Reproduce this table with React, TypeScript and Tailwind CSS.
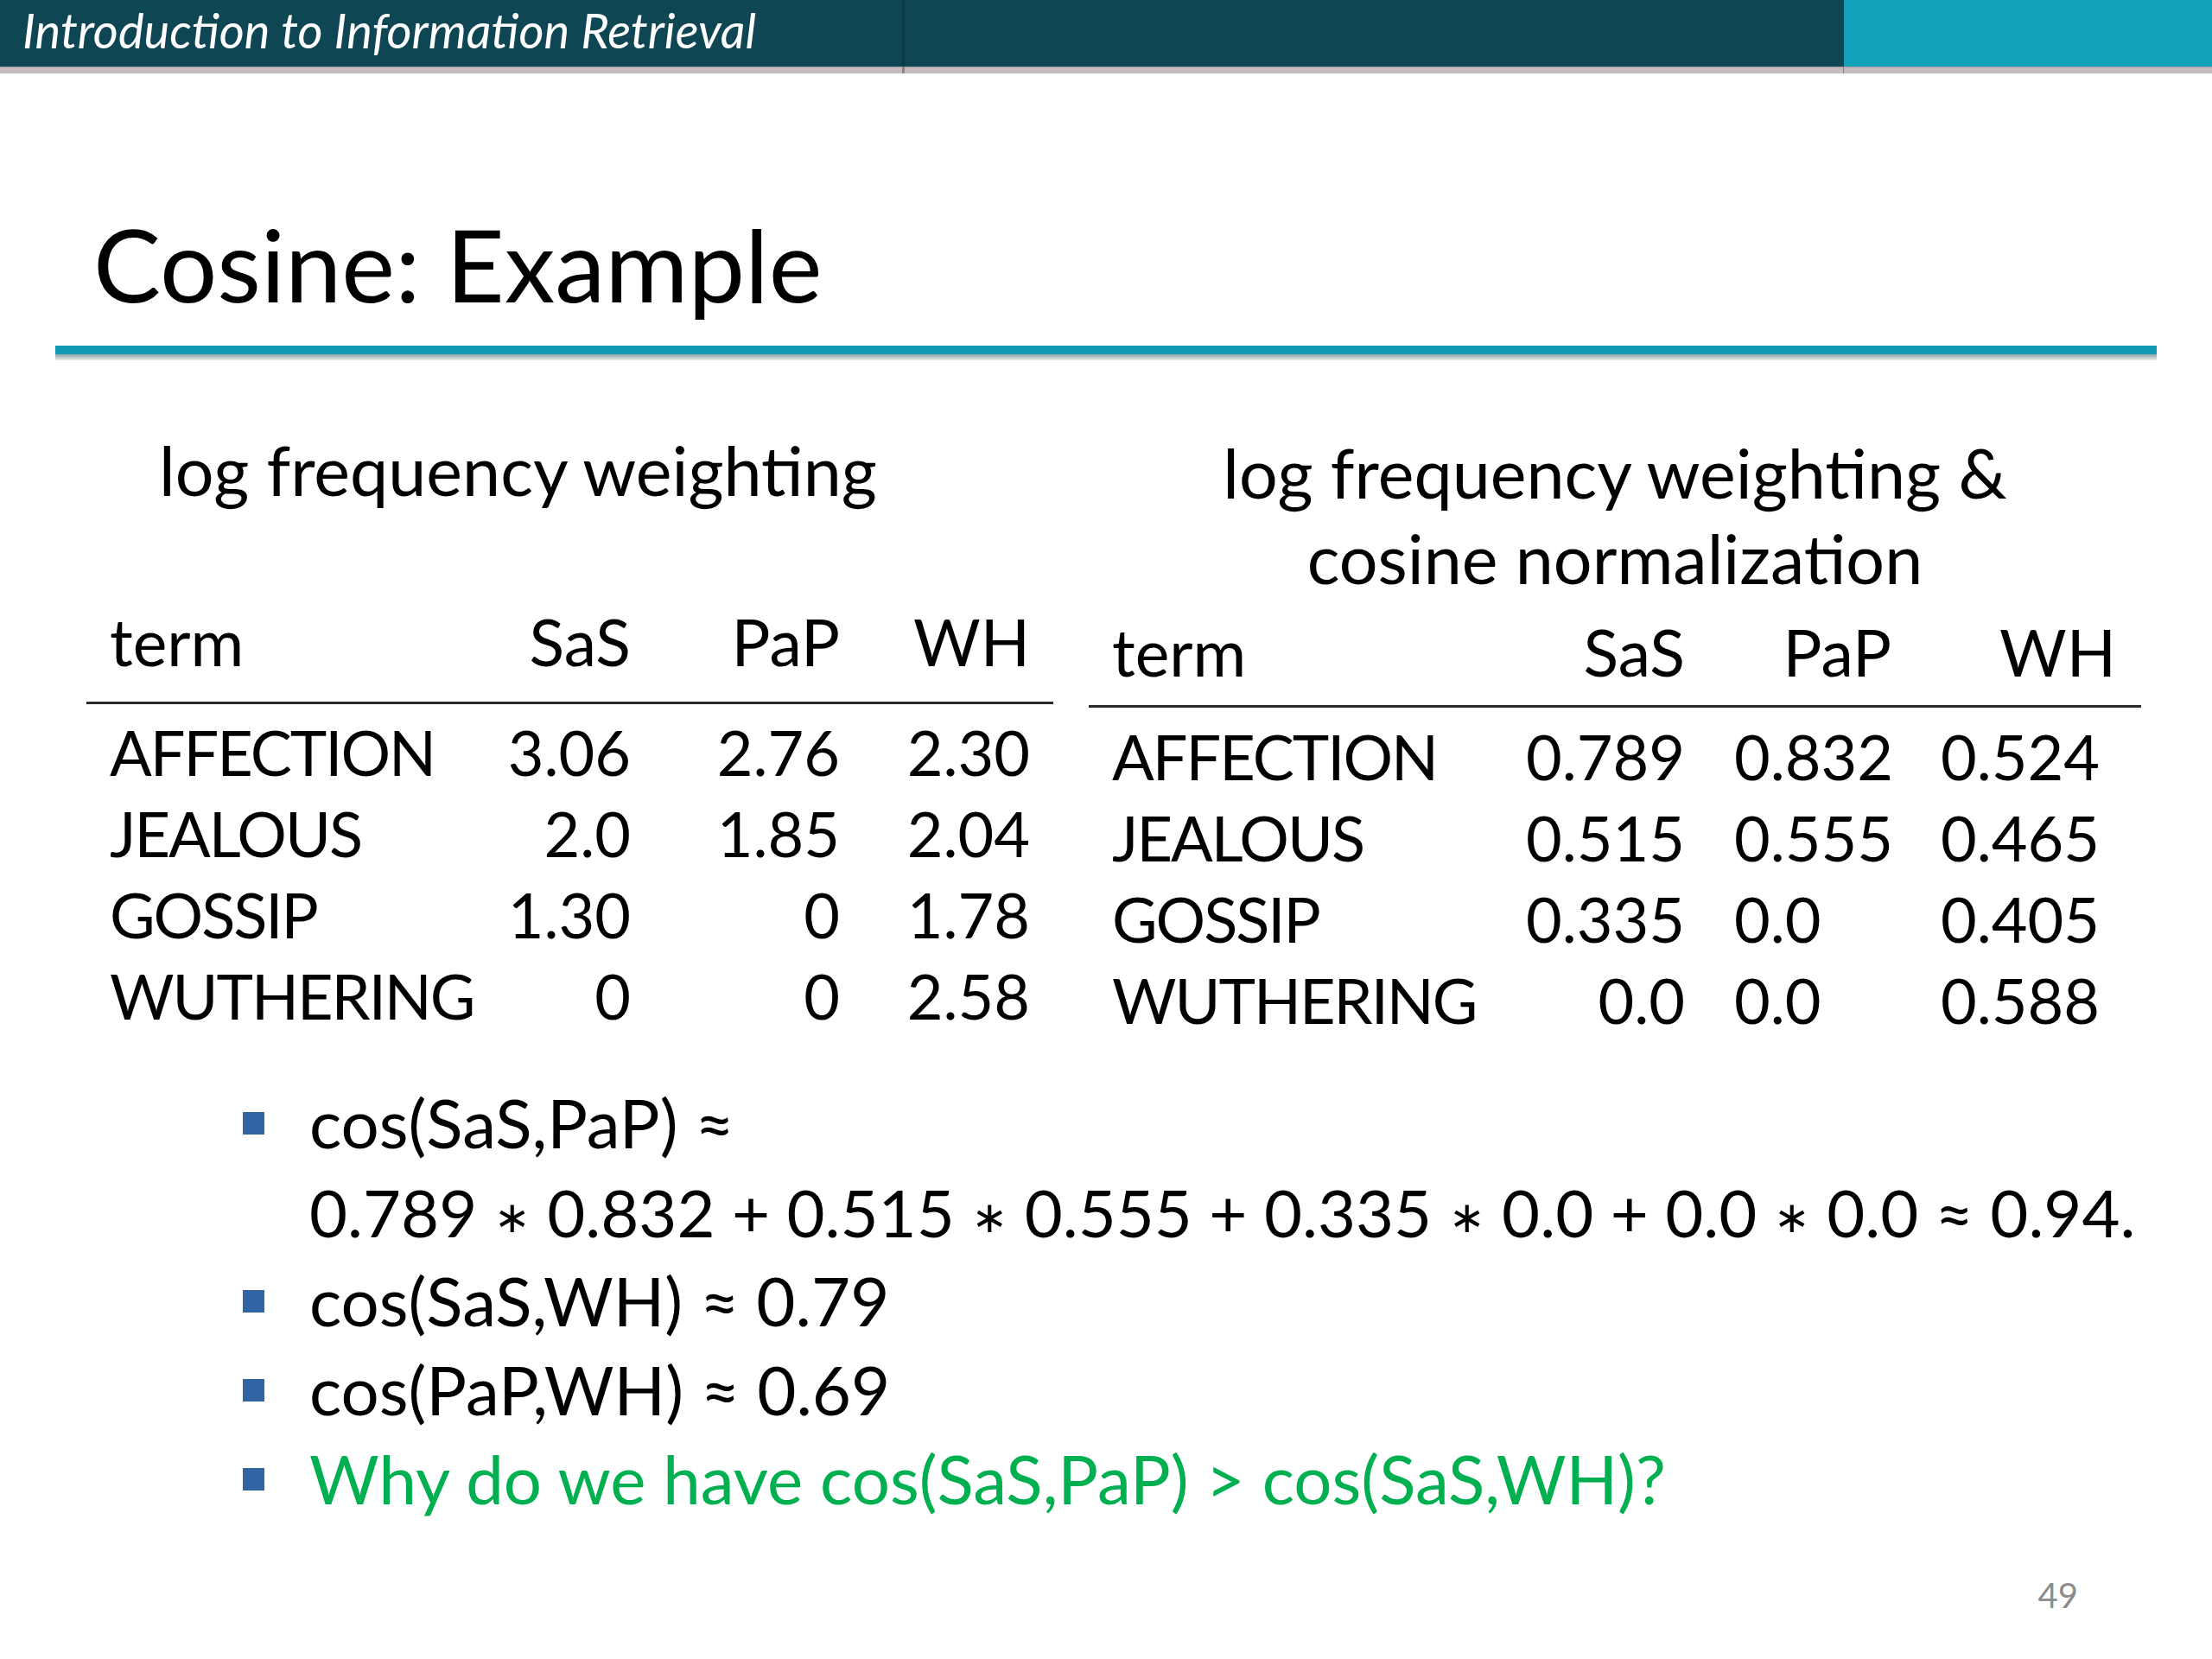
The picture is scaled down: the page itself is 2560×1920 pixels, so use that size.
const LEFT_ROWS = [
  ['AFFECTION', '3.06', '2.76', '2.30'],
  ['JEALOUS', '2.0', '1.85', '2.04'],
  ['GOSSIP', '1.30', '0', '1.78'],
  ['WUTHERING', '0', '0', '2.58'],
];

const RIGHT_ROWS = [
  ['AFFECTION', '0.789', '0.832', '0.524'],
  ['JEALOUS', '0.515', '0.555', '0.465'],
  ['GOSSIP', '0.335', '0.0', '0.405'],
  ['WUTHERING', '0.0', '0.0', '0.588'],
];

function Bullet({ children, green = false }: { children: React.ReactNode; green?: boolean }) {
  return (
    <div className="flex">
      <div className="w-[77px] shrink-0 pt-[39px]">
        <div className="w-[25px] h-[26px] bg-[#3064a2]" />
      </div>
      <div className={green ? 'text-[#00b050]' : 'text-black'}>{children}</div>
    </div>
  );
}

// small math asterisk, sits on the math axis like the slide's
function Times() {
  return <span className="relative -top-[6px] leading-none font-['DejaVu_Sans',sans-serif] text-[0.66em]">∗</span>;
}

export default function App() {
  return (
    <div className="w-[2560px] h-[1920px] bg-white overflow-hidden font-['Lato','Open_Sans',sans-serif] text-black">
      {/* Header bar */}
      <div className="flex h-[85px]">
        <div className="w-[1044px] flex flex-col">
          <div className="h-[77px] bg-[#0e4753] pl-[26px] flex items-start">
            <span className="italic text-white text-[56px] leading-[70px]">
              Introduction to Information Retrieval
            </span>
          </div>
          <div className="flex-1 bg-[#c4bcc0] border-t border-[#9f979b]" />
        </div>
        <div className="w-[3px] bg-[#0a3a44] flex flex-col">
          <div className="h-[77px]" />
          <div className="flex-1 bg-[#8a8589]" />
        </div>
        <div className="w-[1086px] flex flex-col">
          <div className="h-[77px] bg-[#0e4753]" />
          <div className="flex-1 bg-[#c4bcc0] border-t border-[#9f979b]" />
        </div>
        <div className="w-[1px] flex flex-col">
          <div className="h-[77px] bg-[#0e4753]" />
          <div className="flex-1 bg-[#8a8589]" />
        </div>
        <div className="flex-1 flex flex-col">
          <div className="h-[77px] bg-[#13a0b9]" />
          <div className="flex-1 bg-[#c4bcc0] border-t border-[#9f979b]" />
        </div>
      </div>

      {/* Title */}
      <h1 className="mt-[150px] pl-[108px] text-[117px] leading-[140px] font-normal">Cosine: Example</h1>
      <div className="mt-[25px] ml-[64px] w-[2432px]">
        <div className="h-[10px] bg-[#1399b5]" />
        <div className="h-[7px] bg-gradient-to-b from-[#8fa3a8] to-[#e8ecec]" />
      </div>

      {/* Tables */}
      <div className="mt-[80px] flex text-[72px]">
        {/* Left table */}
        <div className="ml-[100px] w-[1119px]">
          <div className="pl-[84px] text-[79px] leading-[94px]">log frequency weighting</div>
          <div className="mt-[104px] px-[27px] grid grid-cols-[400px_203px_242px_220px] text-[75px] leading-[94px]">
            <div>term</div>
            <div className="text-right">SaS</div>
            <div className="text-right">PaP</div>
            <div className="text-right">WH</div>
          </div>
          <div className="mt-[23px] h-[3px] bg-[#2a2a2a]" />
          <div className="mt-[8px] px-[27px] grid grid-cols-[400px_203px_242px_220px] leading-[94px]">
            {LEFT_ROWS.map((r) => (
              <div key={r[0]} className="contents">
                <div className="tracking-[-2px]">{r[0]}</div>
                <div className="text-right">{r[1]}</div>
                <div className="text-right">{r[2]}</div>
                <div className="text-right">{r[3]}</div>
              </div>
            ))}
          </div>
        </div>

        {/* Right table */}
        <div className="ml-[41px] w-[1218px]">
          <div className="text-center text-[79px] leading-[99px]">
            log frequency weighting &amp;
            <br />
            cosine normalization
          </div>
          <div className="mt-[12px] pl-[27px] grid grid-cols-[463px_200px_250px_278px] text-[75px] leading-[94px]">
            <div>term</div>
            <div className="text-right">SaS</div>
            <div className="text-right pr-[11px]">PaP</div>
            <div className="text-right pr-[29px]">WH</div>
          </div>
          <div className="mt-[15px] h-[3px] bg-[#2a2a2a]" />
          <div className="mt-[9px] pl-[27px] grid grid-cols-[463px_200px_250px_278px] leading-[94px]">
            {RIGHT_ROWS.map((r) => (
              <div key={r[0]} className="contents">
                <div className="tracking-[-2px]">{r[0]}</div>
                <div className="text-right">{r[1]}</div>
                <div className="pl-[57px]">{r[2]}</div>
                <div className="pl-[46px]">{r[3]}</div>
              </div>
            ))}
          </div>
        </div>
      </div>

      {/* Bullets */}
      <div className="mt-[44px] ml-[281px] text-[78px] leading-[103px]">
        <Bullet>
          cos(SaS,PaP) ≈
          <br />
          <span className="whitespace-nowrap text-[76px]">
            0.789 <Times /> 0.832 + 0.515 <Times /> 0.555 + 0.335 <Times /> 0.0 + 0.0 <Times /> 0.0 ≈ 0.94.
          </span>
        </Bullet>
        <Bullet>cos(SaS,WH) ≈ 0.79</Bullet>
        <Bullet>cos(PaP,WH) ≈ 0.69</Bullet>
        <Bullet green>Why do we have cos(SaS,PaP) &gt; cos(SaS,WH)?</Bullet>
      </div>

      {/* Page number */}
      <div className="mt-[59px] pr-[155px] text-right text-[40px] leading-[48px] text-[#8c8c8c]">49</div>
    </div>
  );
}
